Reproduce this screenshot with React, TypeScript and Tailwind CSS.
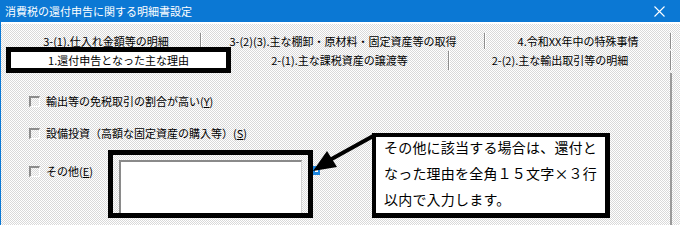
const checker =
  "bg-[image:repeating-conic-gradient(#d9d9d9_0_25%,#ffffff_0_50%)] bg-size-[2px_2px]";

function CheckRow({ label, mnemonic }: { label: string; mnemonic: string }) {
  return (
    <div className="flex items-center h-[14px] gap-[6px]">
      <span className="w-[11px] h-[11px] border-t-2 border-l-2 border-t-[#8c8c8c] border-l-[#8c8c8c] border-b border-r border-b-white border-r-white" />
      <span className="whitespace-nowrap">
        {label}(<span className="underline">{mnemonic}</span>)
      </span>
    </div>
  );
}

function Tab({ label, width, tall }: { label: string; width: string; tall?: boolean }) {
  return (
    <div className={`flex items-center ${width}`}>
      <span className="flex-1 text-center whitespace-nowrap">{label}</span>
      <span
        className={`w-[2px] border-l border-l-[#8e8e8e] border-r border-r-white ${
          tall ? "h-[19px] self-end mb-[3px]" : "h-[16px]"
        }`}
      />
    </div>
  );
}

export default function App() {
  return (
    <div className="w-[680px] h-[225px] overflow-hidden relative flex flex-col font-['Noto_Sans_CJK_JP',sans-serif] text-[11px] leading-none text-black">
      {/* title bar */}
      <div className="h-[22px] shrink-0 bg-[#0b78d4] flex items-center justify-between pl-[5px] pr-[15px] text-white text-[11px]">
        <span>消費税の還付申告に関する明細書設定</span>
        <svg width="11" height="11" viewBox="0 0 11 11">
          <path d="M0.5 0.5 L10.5 10.5 M10.5 0.5 L0.5 10.5" stroke="white" strokeWidth="1.1" />
        </svg>
      </div>

      <div className="flex-1 flex flex-col border-l border-l-[#0b78d4]">
        <div className="h-[2px] bg-white" />
        <div className={`flex-1 flex flex-col pt-[8px] ${checker}`}>
          {/* tab row 1 */}
          <div className="flex h-[18px] ml-[11px]">
            <Tab label="3-(1).仕入れ金額等の明細" width="w-[190px]" />
            <Tab label="3-(2)(3).主な棚卸・原材料・固定資産等の取得" width="w-[284px]" />
            <Tab label="4.令和XX年中の特殊事情" width="w-[186px]" />
          </div>

          {/* tab row 2 */}
          <div className="flex h-[26px] ml-[5px] -mt-[3px]">
            <div className="w-[225px] h-[26px] border-[5px] border-black bg-white flex items-center justify-center whitespace-nowrap">
              1.還付申告となった主な理由
            </div>
            <Tab label="2-(1).主な課税資産の譲渡等" width="w-[219px]" tall />
            <Tab label="2-(2).主な輸出取引等の明細" width="w-[222px]" tall />
          </div>

          {/* panel */}
          <div className="flex-1 w-[671px] border-r-2 border-r-[#9a9a9a] flex flex-col pl-[28px] pt-[21px]">
            <CheckRow label="輸出等の免税取引の割合が高い" mnemonic="Y" />
            <div className="mt-[18px]">
              <CheckRow label="設備投資（高額な固定資産の購入等）" mnemonic="S" />
            </div>
            <div className="mt-[10px] flex items-start">
              <div className="w-[79px] mt-[14px]">
                <CheckRow label="その他" mnemonic="E" />
              </div>
              <div className="w-[205px] h-[68px] border-[5px] border-black pl-[6px] pt-[5px]">
                <div className="w-[183px] h-[53px] bg-white border-t-2 border-l-2 border-[#8a8a8a] border-r border-r-[#d4d4d4]" />
              </div>
              <div className="mt-[16px] w-[7px] h-[9px] bg-[#1c86e0] flex items-center justify-center">
                <span className="w-[3px] h-[3px] bg-white" />
              </div>
            </div>
          </div>
        </div>
      </div>

      {/* annotation arrow */}
      <svg className="absolute left-0 top-0 pointer-events-none" width="680" height="225">
        <line x1="375" y1="135" x2="328" y2="161" stroke="black" strokeWidth="4" />
        <polygon points="313,171 327,151 337,167" fill="black" />
      </svg>

      {/* annotation callout */}
      <div className="absolute left-[372px] top-[133px] w-[238px] h-[85px] bg-white border-[4px] border-r-[5px] border-b-[5px] border-black pl-[8px] font-['Noto_Sans_CJK_JP',sans-serif] text-[14px] leading-[26px] tracking-[0.2px]">
        <div className="-mt-[3px]">
          <div>その他に該当する場合は、還付と</div>
          <div>なった理由を全角１５文字×３行</div>
          <div>以内で入力します。</div>
        </div>
      </div>
    </div>
  );
}
